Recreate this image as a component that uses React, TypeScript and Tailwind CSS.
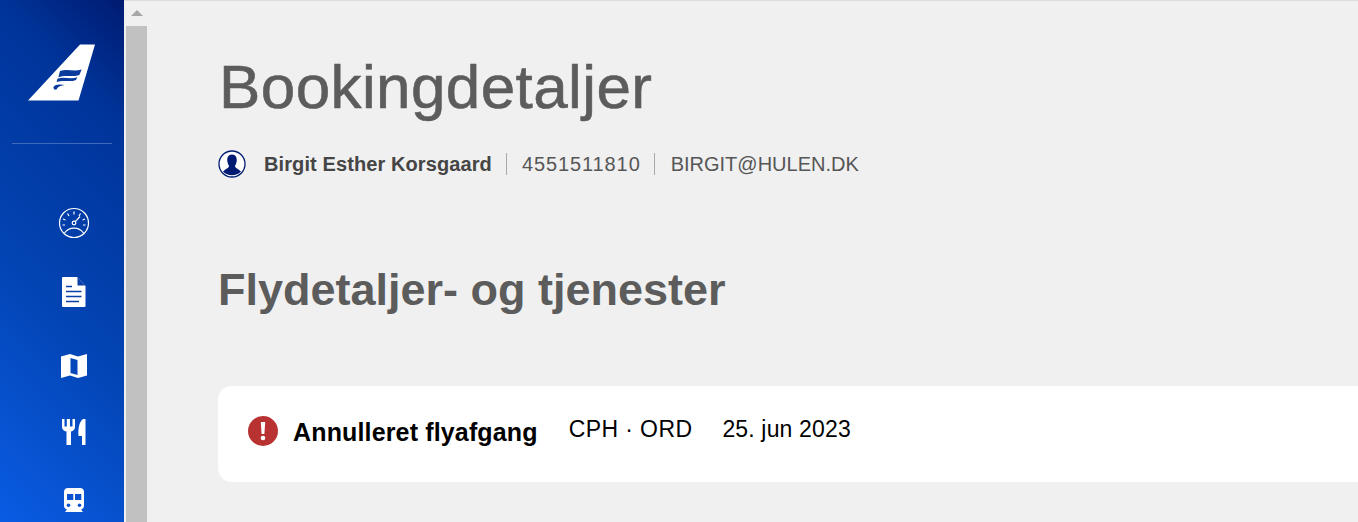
// Booking details page with navy side rail
const font = "font-['Liberation_Sans',Arial,sans-serif]";

function TailLogo() {
  return (
    <svg width="68" height="58" viewBox="0 0 68 58" className="block">
      <path d="M52 0.500 H67 L50.500 56.500 H0 Z" fill="#fff" />
      <path d="M32 27 C39 24.500 46 28 53.700 25.500 L51.300 31 C44 33.500 37 30.500 30.300 33.300 Z" fill="#0a3a9c" />
      <path d="M29.300 34.800 C36 32 42 36 49.300 33.300 L48 36 C42 38.500 35 35.500 28.700 38.200 Z" fill="#0a3a9c" />
      <path d="M25.500 43 C27 40 32 40 37 41 C33 41.500 30 42.500 28.500 45.500 C27 46 25 45 25.500 43 Z" fill="#0a3a9c" />
    </svg>
  );
}

function Gauge() {
  return (
    <svg width="32" height="32" viewBox="0 0 32 32" fill="none" stroke="#fff" strokeWidth="1.200" className="block">
      <circle cx="16" cy="16" r="14.500" />
      <circle cx="16" cy="16" r="1.800" />
      <path d="M17.300 14.700 L22 9.500" />
      <path d="M16 4.500 V7.500 M9.500 6.500 L11 9 M22.500 6.500 L21 9 M5 12 L7.500 13 M27 12 L24.500 13 M4.500 18 H7 M25 18 H27.500" />
      <path d="M6.500 26 C11 19.500 21 19.500 25.500 26" />
    </svg>
  );
}

function Doc() {
  return (
    <svg width="24" height="30" viewBox="0 0 24 30" className="block">
      <path d="M1 0 H15 L23.500 9 V29 a1 1 0 0 1 -1 1 H1 a1 1 0 0 1 -1 -1 V1 a1 1 0 0 1 1 -1 Z" fill="#fff" />
      <path d="M15.500 0.500 V8.500 H23" fill="#0a3fa6" />
      <path d="M4 9.500 H10 M4 14.500 H19.500 M4 19.500 H19.500 M4 24.500 H17" stroke="#0a3fa6" strokeWidth="1.300" />
    </svg>
  );
}

function MapIcon() {
  return (
    <svg width="26" height="24" viewBox="0 0 26 24" className="block">
      <path
        fillRule="evenodd"
        d="M0 2.500 L9 0 L17 2.500 L26 0 V21.500 L17 24 L9 21.500 L0 24 Z M9.500 4 V19 L16.500 21 V6 Z"
        fill="#fff"
      />
    </svg>
  );
}

function Cutlery() {
  return (
    <svg width="24" height="26" viewBox="0 0 24 26" className="block">
      <path d="M0 0 H2.500 V7.500 H4.800 V0 H8 V7.500 H10.500 V0 H13 V8 C13 10.500 11 12 9 12.500 V26 H4.500 V12.500 C2 12 0 10.500 0 8 Z" fill="#fff" />
      <path d="M21 0 H23.500 V26 H20 V17 H16.500 C16 10 17 3 21 0 Z" fill="#fff" />
    </svg>
  );
}

function Train() {
  return (
    <svg width="20" height="25" viewBox="0 0 20 25" className="block">
      <path d="M4 0 H16 C18.500 0 20 1.500 20 4 V18 C20 20 18.500 21 17 21.500 L19 24 H1 L3 21.500 C1.500 21 0 20 0 18 V4 C0 1.500 1.500 0 4 0 Z" fill="#fff" />
      <path d="M3 6 H9.300 V12 H3 Z M11 6 H17.300 V12 H11 Z" fill="#0a52d0" />
      <circle cx="4.500" cy="17.300" r="1.800" fill="#0a52d0" />
      <circle cx="15.500" cy="17.300" r="1.800" fill="#0a52d0" />
    </svg>
  );
}

function Person() {
  return (
    <svg width="28" height="28" viewBox="0 0 28 28" className="block">
      <circle cx="14" cy="14" r="13" fill="#fff" stroke="#001b71" strokeWidth="1.300" />
      <path d="M14 4.500 C10 4.500 9 8 9.300 11 C9.500 13 10.500 15 11 16 C11 18 7.500 19 5 21.500 A12.500 12.500 0 0 0 23 21.500 C20.500 19 17 18 17 16 C17.500 15 18.500 13 18.700 11 C19 8 18 4.500 14 4.500 Z" fill="#001b71" />
    </svg>
  );
}

export default function App() {
  return (
    <div className={`${font} flex h-[522px] w-[1358px] overflow-hidden bg-[#f0f0f0]`}>
      <aside className="flex h-full w-[124px] shrink-0 flex-col items-center bg-[linear-gradient(225deg,#001b71_0%,#00349a_20%,#0345b5_60%,#0a5ce4_100%)]">
        <div className="mt-[44px] ml-[-1px]"><TailLogo /></div>
        <div className="mt-[41px] h-px w-[100px] bg-[#3f69bd]" />
        <nav className="flex w-full flex-col items-center pl-[24px]">
          <div className="mt-[63px]"><Gauge /></div>
          <div className="mt-[38px]"><Doc /></div>
          <div className="mt-[47px]"><MapIcon /></div>
          <div className="mt-[41px]"><Cutlery /></div>
          <div className="mt-[43px]"><Train /></div>
        </nav>
      </aside>

      <div className="flex w-[23px] shrink-0 flex-col border-t border-[#dcdcdc] pl-[2px]">
        <div className="flex h-[25px] w-[21px] items-start justify-center pt-[9px]">
          <div className="h-0 w-0 border-x-[6px] border-b-[6px] border-x-transparent border-b-[#a6a6a6]" />
        </div>
        <div className="w-[21px] flex-1 bg-[#c1c1c1]" />
      </div>

      <main className="min-w-0 flex-1 border-t border-[#dcdcdc] pl-[71px]">
        <h1 className="mt-[51px] pl-px text-[62px] leading-[70px] font-normal tracking-[0.4px] text-[#5c5c5c] [-webkit-text-stroke:0.6px_#5c5c5c]">Bookingdetaljer</h1>
        <div className="mt-[28px] flex h-[28px] items-center text-[#565656]">
          <Person />
          <span className="ml-[18px] text-[20px] font-bold tracking-[0.1px] text-[#454545]">Birgit Esther Korsgaard</span>
          <span className="ml-[14px] h-[22px] w-px bg-[#a8a8a8]" />
          <span className="ml-[15px] text-[20px] tracking-[0.9px]">4551511810</span>
          <span className="ml-[13px] h-[22px] w-px bg-[#a8a8a8]" />
          <span className="ml-[16px] text-[20px]">BIRGIT@HULEN.DK</span>
        </div>
        <h2 className="mt-[85px] text-[45px] leading-[54px] font-bold text-[#5c5c5c]">Flydetaljer- og tjenester</h2>
        <section className="mt-[69px] flex h-[96px] items-center rounded-l-[14px] bg-white pl-[30px] text-black">
          <svg width="30" height="30" viewBox="0 0 30 30" className="mb-[7px] block">
            <circle cx="15" cy="15" r="15" fill="#b83232" />
            <path d="M12.800 6 H17.200 L16.400 18 H13.600 Z" fill="#fff" />
            <circle cx="15" cy="22" r="2.300" fill="#fff" />
          </svg>
          <span className="mb-[3px] ml-[15px] text-[25px] font-bold tracking-[0.15px]">Annulleret flyafgang</span>
          <span className="mb-[9px] ml-[31px] text-[23px] tracking-[0.4px]">CPH · ORD</span>
          <span className="mb-[9px] ml-[30px] text-[23px] tracking-[0.15px]">25. jun 2023</span>
        </section>
      </main>
    </div>
  );
}
